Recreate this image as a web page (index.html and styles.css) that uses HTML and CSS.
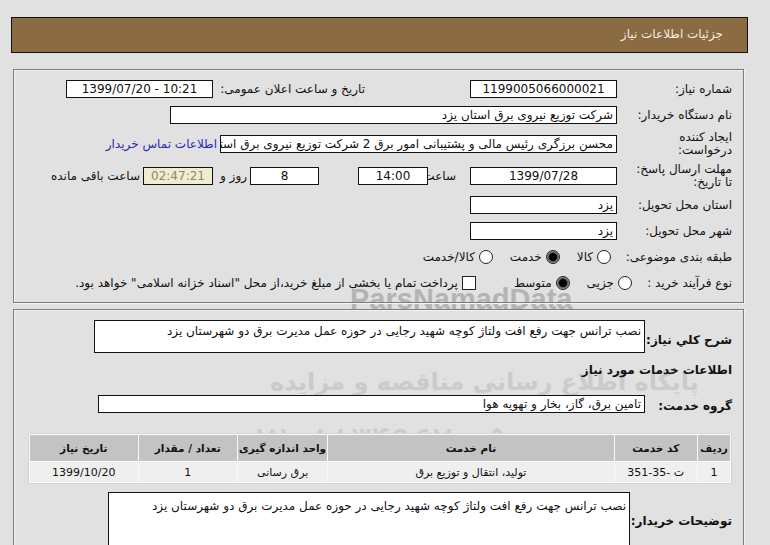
FILE: index.html
```html
<!DOCTYPE html>
<html lang="fa" dir="rtl">
<head>
<meta charset="utf-8">
<title>جزئیات اطلاعات نیاز</title>
<link rel="stylesheet" href="styles.css">
</head>
<body>
<div class="watermark" aria-hidden="true">
  <div class="wm-latin">ParsNamadData</div>
  <div class="wm-line1">مرکز فراوری اطلاعات پارس نماد داده</div>
  <div class="wm-line2">پایگاه اطلاع رسانی مناقصه و مزایده</div>
  <div class="wm-line3">۰۲۱-۸۸۳۴۹۶۷۰-۵</div>
</div>
<div class="page">
  <div class="header">جزئیات اطلاعات نیاز</div>

  <section class="panel panel-top">
    <div class="row">
      <div class="label">شماره نیاز:</div>
      <div class="box w147 center">1199005066000021</div>
      <div class="label-mid">تاریخ و ساعت اعلان عمومی:</div>
      <div class="box w147 center ltr">1399/07/20 - 10:21</div>
    </div>
    <div class="row">
      <div class="label">نام دستگاه خریدار:</div>
      <div class="box w447">شرکت توزیع نیروی برق استان یزد</div>
    </div>
    <div class="row tall">
      <div class="label two">ایجاد کننده<br>درخواست:</div>
      <div class="box w397 clip">محسن  برزگری رئیس مالی و پشتیبانی امور برق 2 شرکت توزیع نیروی برق استان یزد</div>
      <a class="contact" href="#">اطلاعات تماس خریدار</a>
    </div>
    <div class="row tall">
      <div class="label two">مهلت ارسال پاسخ:<br>تا تاریخ:</div>
      <div class="box w147 center">1399/07/28</div>
      <div class="txt-hour">ساعت</div>
      <div class="box w70 center">14:00</div>
      <div class="box w69 center days">8</div>
      <div class="txt-days">روز و</div>
      <div class="box w70 center timer">02:47:21</div>
      <div class="txt-left">ساعت باقی مانده</div>
    </div>
    <div class="row">
      <div class="label">استان محل تحویل:</div>
      <div class="box w147">یزد</div>
    </div>
    <div class="row">
      <div class="label">شهر محل تحویل:</div>
      <div class="box w147">یزد</div>
    </div>
    <div class="row">
      <div class="label">طبقه بندی موضوعی:</div>
      <div class="opts opts-cat">
        <span class="opt"><span class="radio"></span>کالا</span>
        <span class="opt"><span class="radio on"></span>خدمت</span>
        <span class="opt"><span class="radio"></span>کالا/خدمت</span>
      </div>
    </div>
    <div class="row">
      <div class="label">نوع فرآیند خرید :</div>
      <div class="opts opts-proc">
        <span class="opt"><span class="radio"></span>جزیی</span>
        <span class="opt"><span class="radio on"></span>متوسط</span>
        <span class="opt opt-check"><span class="check"></span>پرداخت تمام یا بخشی از مبلغ خرید،از محل "اسناد خزانه اسلامی" خواهد بود.</span>
      </div>
    </div>
  </section>

  <section class="panel panel-bottom">
    <div class="row2 desc-row">
      <div class="blabel">شرح کلي نياز:</div>
      <div class="box area w551">نصب ترانس جهت رفع افت ولتاژ کوچه شهید رجایی در حوزه عمل مدیرت  برق دو شهرستان  یزد</div>
    </div>
    <div class="heading">اطلاعات خدمات مورد نیاز</div>
    <div class="row2 group-row">
      <div class="blabel">گروه خدمت:</div>
      <div class="box w547">تامین برق، گاز، بخار و تهویه هوا</div>
    </div>
    <table class="items">
      <thead>
        <tr>
          <th class="c1">ردیف</th>
          <th class="c2">کد خدمت</th>
          <th class="c3">نام خدمت</th>
          <th class="c4">واحد اندازه گیری</th>
          <th class="c5">تعداد / مقدار</th>
          <th class="c6">تاریخ نیاز</th>
        </tr>
      </thead>
      <tbody>
        <tr>
          <td>1</td>
          <td><span class="ltr-inline">351-35- ت</span></td>
          <td>تولید، انتقال و توزیع برق</td>
          <td>برق رسانی</td>
          <td>1</td>
          <td>1399/10/20</td>
        </tr>
      </tbody>
    </table>
    <div class="row2 notes-row">
      <div class="blabel notes-label">توضیحات خریدار:</div>
      <div class="box notes w522">نصب ترانس جهت رفع افت ولتاژ کوچه شهید رجایی در حوزه عمل مدیرت  برق دو شهرستان  یزد</div>
    </div>
  </section>
</div>
</body>
</html>
```

FILE: styles.css
```css
html, body {
  margin: 0;
  padding: 0;
  overflow: hidden;
  background: #e1e1e1;
}
body {
  font-family: "DejaVu Sans", "Noto Sans", sans-serif;
  font-size: 11px;
  color: #111;
  position: relative;
  height: 545px;
}

.watermark {
  position: absolute;
  left: 0;
  top: 0;
  width: 770px;
  height: 545px;
  z-index: 0;
  pointer-events: none;
  color: #cbcbcb;
}
.wm-latin {
  position: absolute;
  left: 350px;
  top: 283px;
  font-family: "Liberation Sans", sans-serif;
  font-weight: bold;
  font-size: 29px;
  color: #b4b4b4;
  direction: ltr;
}
.wm-line1 {
  position: absolute;
  left: 290px;
  top: 328px;
  font-size: 19px;
  font-style: italic;
}
.wm-line2 {
  position: absolute;
  left: 270px;
  top: 368px;
  font-size: 24px;
  font-weight: bold;
}
.wm-line3 {
  position: absolute;
  left: 235px;
  top: 418px;
  font-size: 38px;
  direction: ltr;
}

.page {
  position: relative;
  z-index: 1;
  width: 737px;
  margin-right: 22px;
  margin-left: 11px;
  padding-top: 17px;
}

.header {
  box-sizing: border-box;
  height: 36px;
  background: #8b6b41;
  border: 1px solid #111;
  color: #f4ece0;
  font-size: 12px;
  line-height: 33px;
  padding-right: 24px;
}

.panel {
  box-sizing: border-box;
  width: 731px;
  margin-right: 4px;
  margin-left: 2px;
  border: 1px solid #7c7c7c;
  box-shadow: inset 1px 1px 0 #f4f4f4, 1px 1px 0 #f4f4f4;
}
.panel-top {
  margin-top: 16px;
  height: 234px;
  padding: 6px 11px 6px 4px;
}
.panel-bottom {
  margin-top: 6px;
  height: 300px;
  padding: 10px 11px 10px 4px;
}

.row {
  display: flex;
  align-items: center;
  height: 26px;
}
.row.tall {
  height: 32px;
}
.label {
  width: 103px;
  margin-left: 12px;
  flex: none;
  font-size: 12px;
  white-space: nowrap;
}
.label.two {
  line-height: 13px;
}
.label-mid {
  width: 152px;
  margin-right: 105px;
  flex: none;
  font-size: 12px;
}

.box {
  box-sizing: border-box;
  height: 18px;
  background: #fff;
  border: 1px solid #111;
  font-size: 12px;
  line-height: 16px;
  padding: 0 3px;
  white-space: nowrap;
  overflow: hidden;
  flex: none;
}
.center { text-align: center; }
.ltr { direction: ltr; }
.ltr-inline { direction: ltr; unicode-bidi: isolate; display: inline-block; }
.w147 { width: 147px; }
.w447 { width: 447px; }
.w397 { width: 397px; }
.w70 { width: 70px; }
.w69 { width: 69px; }
.w551 { width: 551px; }
.w547 { width: 547px; }
.w522 { width: 522px; }
.clip { text-overflow: clip; }

.contact {
  color: #2a2ab8;
  text-decoration: none;
  font-size: 12px;
  margin-right: 3px;
  white-space: nowrap;
}

.txt-hour {
  width: 42px;
  box-sizing: border-box;
  padding-right: 14px;
  font-size: 12px;
  flex: none;
}
.days { margin-right: 39px; }
.txt-days {
  width: 37px;
  box-sizing: border-box;
  padding-right: 3px;
  font-size: 12px;
  flex: none;
}
.timer {
  background: #efecd0;
  color: #8c8a6a;
}
.txt-left {
  margin-right: 3px;
  font-size: 12px;
  white-space: nowrap;
}

.opts {
  display: flex;
  align-items: center;
  font-size: 12px;
  white-space: nowrap;
}
.opts-cat { margin-right: 6px; }
.opts-proc { margin-right: -15px; }
.opt {
  display: flex;
  align-items: center;
  margin-left: 17px;
}
.radio {
  box-sizing: border-box;
  width: 14px;
  height: 14px;
  border: 1px solid #222;
  border-radius: 50%;
  background: #fff;
  margin-left: 4px;
  flex: none;
}
.radio.on {
  background: radial-gradient(circle, #000 0, #000 3.5px, #555 4.5px, #9a9a9a 6px);
}
.check {
  box-sizing: border-box;
  width: 14px;
  height: 14px;
  border: 1px solid #222;
  background: #fff;
  margin-left: 4px;
  flex: none;
}
.opt-check { margin-right: 21px; }

.row2 {
  display: flex;
  align-items: center;
}
.blabel {
  font-weight: bold;
  font-size: 12px;
  white-space: nowrap;
  flex: none;
}
.desc-row .blabel {
  width: 80px;
  margin-left: 7px;
  padding-top: 6px;
}
.box.area {
  height: 33px;
  white-space: normal;
  line-height: 16px;
  padding-top: 2px;
}
.heading {
  font-weight: bold;
  font-size: 12px;
  height: 16px;
  line-height: 16px;
  margin-top: 9px;
}
.group-row {
  margin-top: 17px;
}
.group-row .blabel {
  width: 80px;
  margin-left: 7px;
  padding-top: 4px;
}

.items {
  width: 704px;
  margin-top: 20px;
  margin-right: 0;
  border-collapse: separate;
  border-spacing: 1px;
  background: #fafafa;
  border: 1px solid #d4d4d4;
  font-size: 11px;
  text-align: center;
}
.items th {
  background: #c3c3c3;
  height: 26px;
  padding: 0;
  font-weight: bold;
  white-space: nowrap;
  font-size: 10.5px;
}
.items td {
  background: #efefef;
  height: 20px;
  padding: 0;
  white-space: nowrap;
}
.items .c1 { width: 32px; }
.items .c2 { width: 82px; }
.items .c3 { width: 284px; }
.items .c4 { width: 89px; }
.items .c5 { width: 98px; }
.items .c6 { width: 107px; }

.notes-row {
  align-items: flex-start;
  margin-top: 8px;
}
.notes-label {
  width: 96px;
  margin-left: 6px;
  padding-top: 22px;
}
.box.notes {
  height: 70px;
  white-space: normal;
  padding-top: 5px;
}
```
